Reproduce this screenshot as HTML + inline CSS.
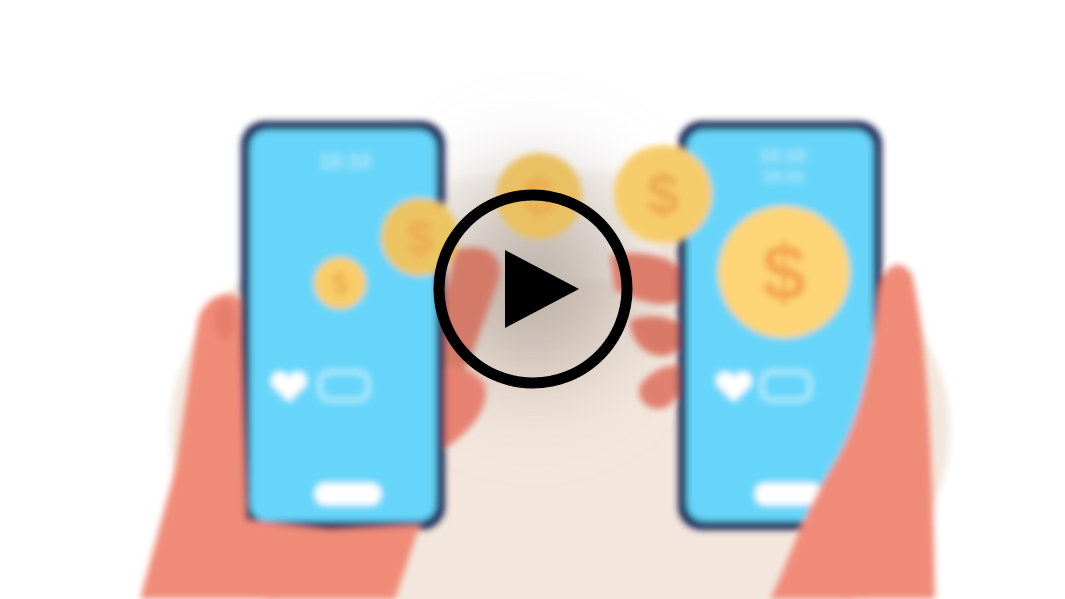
<!DOCTYPE html>
<html><head><meta charset="utf-8"><style>
html,body{margin:0;padding:0;background:#fff;overflow:hidden;width:1065px;height:599px}
svg{display:block}
</style></head><body>
<svg width="1065" height="599" viewBox="0 0 1065 599" xmlns="http://www.w3.org/2000/svg">
<defs>
<filter id="b" x="-20%" y="-20%" width="140%" height="140%"><feGaussianBlur stdDeviation="3.5"/></filter>
<filter id="bb" x="-50%" y="-50%" width="200%" height="200%"><feGaussianBlur stdDeviation="30"/></filter>
<radialGradient id="sh" cx="0.5" cy="0.5" r="0.5">
<stop offset="0" stop-color="#9a8a80" stop-opacity="0.75"/>
<stop offset="0.6" stop-color="#b0a49c" stop-opacity="0.4"/>
<stop offset="1" stop-color="#d8d0cc" stop-opacity="0"/>
</radialGradient>
</defs>
<rect width="1065" height="599" fill="#fff"/>
<g filter="url(#b)">
<ellipse cx="560" cy="430" rx="390" ry="260" fill="#f3e7dd"/>
<rect x="400" y="80" width="260" height="200" fill="#fff" opacity="0.6"/>
</g>
<ellipse cx="533" cy="280" rx="150" ry="160" fill="url(#sh)" filter="url(#bb)"/>
<g filter="url(#b)">
<path d="M455 250 C490 240 510 260 495 290 L470 360 C460 380 440 385 430 370 Z" fill="#d47a68"/>
<path d="M400 380 C430 360 470 360 485 385 C490 410 470 430 450 445 C430 460 400 455 380 425 C365 405 375 390 400 380Z" fill="#e68272"/>
<ellipse cx="415" cy="445" rx="18" ry="16" fill="#e88676"/>
<path d="M610 255 C640 250 670 255 680 270 L680 300 C660 310 640 300 615 290 Z" fill="#dc7c6a"/>
<path d="M630 320 C660 310 685 320 690 340 L670 355 C650 360 630 345 630 320Z" fill="#d97a68"/>
<path d="M640 385 C660 360 690 360 690 380 L670 405 C655 415 635 405 640 385Z" fill="#e08070"/>
<rect x="241" y="121" width="204" height="409" rx="24" fill="#1a2756"/>
<rect x="250" y="130" width="186" height="391" rx="17" fill="#66d5f9"/>
<text x="345" y="168" font-family="Liberation Sans, sans-serif" font-size="20" font-weight="bold" fill="#b0e8f8" text-anchor="middle">10:10</text>
<path d="M272 385 C268 370 285 368 289 378 C293 368 310 370 306 385 L289 402 Z" fill="#fff"/>
<rect x="320" y="372" width="48" height="28" rx="10" fill="none" stroke="#bdeefb" stroke-width="4"/>
<rect x="315" y="483" width="66" height="22" rx="10" fill="#fff"/>
<rect x="678" y="121" width="204" height="409" rx="24" fill="#1a2756"/>
<rect x="687" y="130" width="186" height="391" rx="17" fill="#66d5f9"/>
<text x="783" y="162" font-family="Liberation Sans, sans-serif" font-size="18" font-weight="bold" fill="#b0e8f8" text-anchor="middle">10:10</text>
<text x="783" y="182" font-family="Liberation Sans, sans-serif" font-size="16" font-weight="bold" fill="#b0e8f8" text-anchor="middle">10:10</text>
<path d="M717 385 C713 370 730 368 734 378 C738 368 755 370 751 385 L734 402 Z" fill="#fff"/>
<rect x="762" y="372" width="48" height="28" rx="10" fill="none" stroke="#bdeefb" stroke-width="4"/>
<rect x="755" y="483" width="66" height="22" rx="10" fill="#fff"/>
<g font-family="Liberation Sans, sans-serif" font-weight="bold" text-anchor="middle" fill="#eba84e">
<circle cx="340" cy="283" r="26" fill="#f8ce68"/><text x="340" y="294" font-size="30">$</text>
<circle cx="420" cy="237" r="39" fill="#ecc462"/><text x="420" y="254" font-size="48">$</text>
<circle cx="539" cy="196" r="43" fill="#e9c062"/><text x="539" y="214" font-size="52">$</text>
<circle cx="663" cy="194" r="49" fill="#f6cc6a"/><text x="663" y="214" font-size="58">$</text>
<circle cx="784" cy="272" r="66" fill="#fdd577"/><text x="784" y="300" font-size="80" fill="#f4a54a">$</text>
</g>
<path d="M140 599 L175 470 L198 320 C205 295 230 288 240 300 L246 520 L330 530 L420 525 L395 599 Z" fill="#f08b78"/>
<ellipse cx="225" cy="320" rx="10" ry="20" fill="#e57e6c"/>
<path d="M770 599 C790 560 800 520 830 470 C855 430 870 380 878 300 C880 265 900 255 912 275 C925 330 932 420 935 599 Z" fill="#f08b78"/>
</g>
<circle cx="533" cy="289" r="94" fill="none" stroke="#000" stroke-width="11"/>
<path d="M505 250 L505 328 L579 289 Z" fill="#000"/>
</svg>
</body></html>
